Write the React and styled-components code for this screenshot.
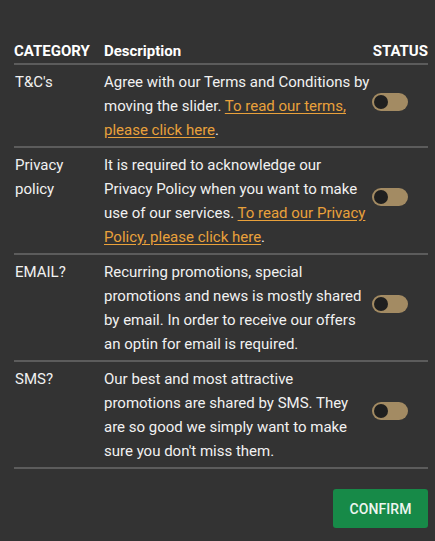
import { useState } from "react"
import styled, { createGlobalStyle } from "styled-components"

const GlobalStyle = createGlobalStyle`
  html, body {
    margin: 0;
    background: #333333;
  }
  body {
    font-family: Roboto, "Liberation Sans", sans-serif;
    color: #f1f1f1;
  }
`

const Page = styled.div`
  padding: 39px 7px 12px 14px;
`

const Table = styled.div`
  display: grid;
  grid-template-columns: 90px 267px 1fr;
`

const HeadCell = styled.div`
  font-size: 15px;
  font-weight: 700;
  line-height: 24px;
  color: #ffffff;
  border-bottom: 2px solid #5c5c5c;
  text-align: ${(props) => (props.$right ? "right" : "left")};
`

const Cell = styled.div`
  font-size: 15px;
  line-height: 24px;
  padding: 5px 0 4px;
  border-bottom: 2px solid #5c5c5c;
  padding-left: ${(props) => (props.$first ? "1px" : "0")};
`

const StatusCell = styled.div`
  display: flex;
  align-items: center;
  border-bottom: 2px solid #5c5c5c;
`

const TextLink = styled.a`
  color: #e9a13b;
  text-decoration: underline;
  text-underline-offset: 2px;
  cursor: pointer;
`

const Toggle = styled.button`
  width: 36px;
  height: 18px;
  border: none;
  border-radius: 9px;
  padding: 0 2px;
  margin: 0 0 8px 1px;
  background: #a38b63;
  display: flex;
  align-items: center;
  justify-content: ${(props) => (props.$on ? "flex-end" : "flex-start")};
  cursor: pointer;

  span {
    width: 14px;
    height: 14px;
    border-radius: 50%;
    background: #1f1f1f;
  }
`

const Footer = styled.div`
  display: flex;
  justify-content: flex-end;
  padding-top: 20px;
`

const ConfirmButton = styled.button`
  width: 95px;
  height: 39px;
  border: none;
  border-radius: 3px;
  background: #178a48;
  color: #eef6f0;
  font-family: Roboto, "Liberation Sans", sans-serif;
  font-size: 14px;
  font-weight: 500;
  letter-spacing: 0.1px;
  cursor: pointer;
`

const rows = [
  {
    id: "tc",
    category: "T&C's",
    text: "Agree with our Terms and Conditions by moving the slider. ",
    link: "To read our terms, please click here",
  },
  {
    id: "privacy",
    category: "Privacy policy",
    text: "It is required to acknowledge our Privacy Policy when you want to make use of our services. ",
    link: "To read our Privacy Policy, please click here",
  },
  {
    id: "email",
    category: "EMAIL?",
    text: "Recurring promotions, special promotions and news is mostly shared by email. In order to receive our offers an optin for email is required.",
  },
  {
    id: "sms",
    category: "SMS?",
    text: "Our best and most attractive promotions are shared by SMS. They are so good we simply want to make sure you don't miss them.",
  },
]

const App = () => {
  const [status, setStatus] = useState({})

  const flip = (id) => setStatus((s) => ({ ...s, [id]: !s[id] }))

  return (
    <Page>
      <GlobalStyle />
      <Table>
        <HeadCell>CATEGORY</HeadCell>
        <HeadCell>Description</HeadCell>
        <HeadCell $right>STATUS</HeadCell>
        {rows.map((row) => (
          <Row key={row.id} row={row} on={!!status[row.id]} onFlip={() => flip(row.id)} />
        ))}
      </Table>
      <Footer>
        <ConfirmButton>CONFIRM</ConfirmButton>
      </Footer>
    </Page>
  )
}

const Row = ({ row, on, onFlip }) => (
  <>
    <Cell $first>{row.category}</Cell>
    <Cell>
      {row.text}
      {row.link && (
        <>
          <TextLink>{row.link}</TextLink>.
        </>
      )}
    </Cell>
    <StatusCell>
      <Toggle $on={on} onClick={onFlip} aria-label={`Toggle ${row.category}`}>
        <span />
      </Toggle>
    </StatusCell>
  </>
)

export default App
